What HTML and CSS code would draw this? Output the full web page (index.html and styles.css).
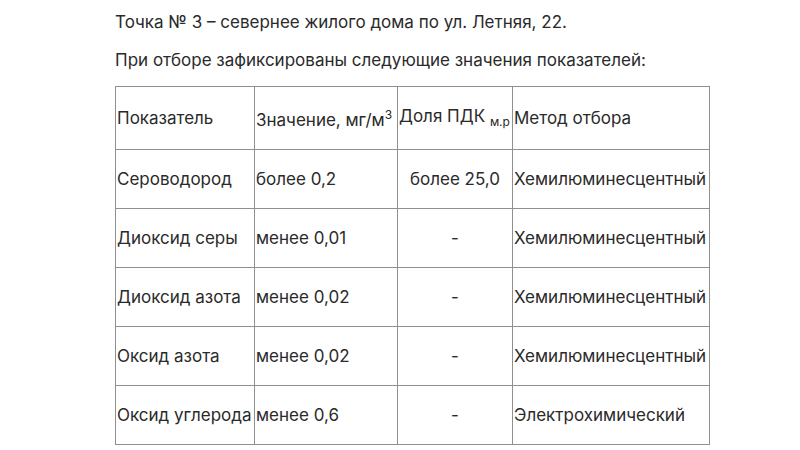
FILE: index.html
```html
<!DOCTYPE html>
<html lang="ru">
<head>
<meta charset="utf-8">
<link rel="stylesheet" href="styles.css">
</head>
<body>
<div class="content">
  <p class="para">Точка № 3 – севернее жилого дома по ул. Летняя, 22.</p>
  <p class="para">При отборе зафиксированы следующие значения показателей:</p>
  <table class="data">
    <colgroup>
      <col class="c1"><col class="c2"><col class="c3"><col class="c4">
    </colgroup>
    <tr class="head">
      <td>Показатель</td>
      <td>Значение, мг/м<sup>3</sup></td>
      <td>Доля ПДК <sub>м.р</sub></td>
      <td>Метод отбора</td>
    </tr>
    <tr>
      <td>Сероводород</td>
      <td>более 0,2</td>
      <td class="center">более 25,0</td>
      <td>Хемилюминесцентный</td>
    </tr>
    <tr>
      <td>Диоксид серы</td>
      <td>менее 0,01</td>
      <td class="center">-</td>
      <td>Хемилюминесцентный</td>
    </tr>
    <tr>
      <td>Диоксид азота</td>
      <td>менее 0,02</td>
      <td class="center">-</td>
      <td>Хемилюминесцентный</td>
    </tr>
    <tr>
      <td>Оксид азота</td>
      <td>менее 0,02</td>
      <td class="center">-</td>
      <td>Хемилюминесцентный</td>
    </tr>
    <tr>
      <td>Оксид углерода</td>
      <td>менее 0,6</td>
      <td class="center">-</td>
      <td>Электрохимический</td>
    </tr>
  </table>
</div>
</body>
</html>
```
FILE: styles.css
```css
html, body {
  margin: 0;
  padding: 0;
  background: #ffffff;
}
body {
  font-family: Inter, "Noto Sans", sans-serif;
  font-size: 17px;
  color: #2a2a2a;
}
.content {
  padding: 10px 0 0 115px;
}
.para {
  margin: 0 0 13px 0;
  line-height: 25px;
}
.data {
  border-collapse: collapse;
  margin-top: 3px;
  table-layout: fixed;
}
.c1 { width: 139px; }
.c2 { width: 143px; }
.c3 { width: 115px; }
.c4 { width: 197px; }
.data td {
  border: 1px solid #8f8f8f;
  height: 59px;
  padding: 0 1px;
  box-sizing: border-box;
  white-space: nowrap;
  overflow: visible;
  vertical-align: middle;
}
.data .head td {
  height: 63px;
}
.data .center {
  text-align: center;
}
sup, sub {
  font-size: 12px;
}
```
